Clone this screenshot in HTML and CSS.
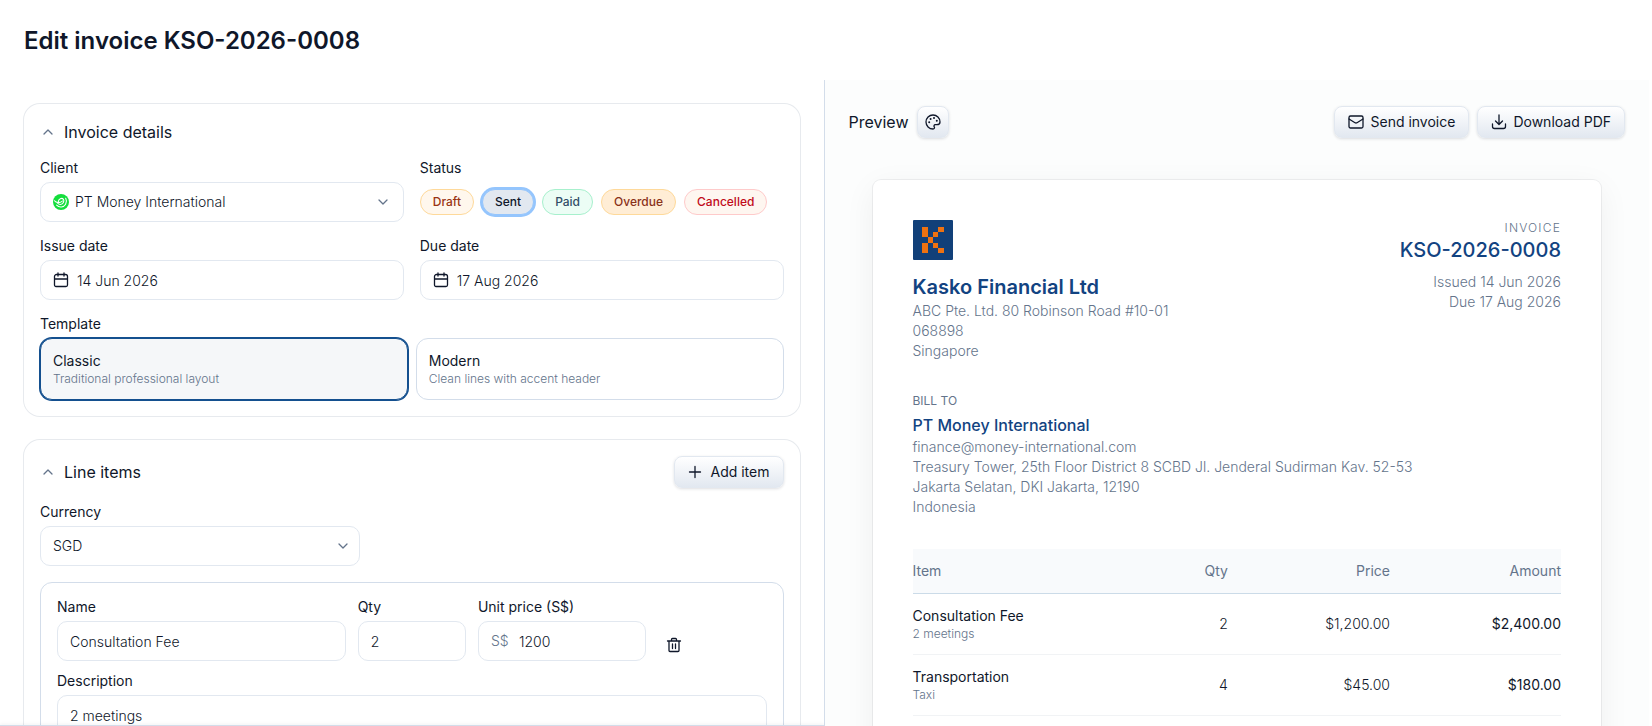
FILE: index.html
```html
<!DOCTYPE html>
<html lang="en">
<head>
  <meta charset="UTF-8" />
  <meta name="viewport" content="width=device-width, initial-scale=1.0" />
  <title>Edit invoice KSO-2026-0008</title>
  <link rel="stylesheet" href="styles.css">
</head>
<body>
  <div class="page">
    <header class="page-header">
      <h1>Edit invoice KSO-2026-0008</h1>
    </header>

    <main class="editor">
      <form class="form-pane">
        <div class="form-scroll">
          <section class="card">
            <div class="card-header">
              <button type="button" class="collapse-btn">
                <svg class="icon" viewBox="0 0 16 16"><path d="M4 10l4-4 4 4"/></svg>
                <span>Invoice details</span>
              </button>
            </div>

            <div class="field-grid">
              <div class="field">
                <label for="client">Client</label>
                <div class="control">
                  <svg class="client-logo" viewBox="0 0 16 16">
                    <circle cx="8" cy="8" r="8" fill="#14de3c"/>
                    <g fill="none" stroke="#fff" stroke-width="1.1" stroke-linecap="round">
                      <path d="M1.500 6.800C3 9 7.500 9.300 9.400 7"/>
                      <path d="M5.400 7.600C5.200 5 9 3.400 10.400 5.300c1.300 1.900-.4 5.100-3 5.200-1.300 0-2.200-.5-2.700-1.200"/>
                      <path d="M3.600 11.200c2.700 2.700 7.200 2.200 9-.9 1.100-1.900 1.100-4.200.1-6"/>
                    </g>
                  </svg>
                  <select id="client" class="input-client">
                    <option>PT Money International</option>
                  </select>
                  <svg class="icon chevron" viewBox="0 0 16 16"><path d="M4 6l4 4 4-4"/></svg>
                </div>
              </div>

              <div class="field" role="group" aria-labelledby="status-label">
                <span class="label" id="status-label">Status</span>
                <div class="chips">
                  <button type="button" class="chip chip-draft">Draft</button>
                  <button type="button" class="chip chip-sent active" aria-pressed="true">Sent</button>
                  <button type="button" class="chip chip-paid">Paid</button>
                  <button type="button" class="chip chip-overdue">Overdue</button>
                  <button type="button" class="chip chip-cancelled">Cancelled</button>
                </div>
              </div>

              <div class="field">
                <label for="issueDate">Issue date</label>
                <div class="control">
                  <svg class="icon calendar" viewBox="0 0 16 16"><path d="M1.500 4.500a2 2 0 0 1 2-2h9a2 2 0 0 1 2 2V13a1.500 1.500 0 0 1-1.500 1.500H3A1.500 1.500 0 0 1 1.500 13zM1.500 7h13M5 1v3M11 1v3"/></svg>
                  <input type="text" id="issueDate" class="input-date" value="14 Jun 2026">
                </div>
              </div>

              <div class="field">
                <label for="dueDate">Due date</label>
                <div class="control">
                  <svg class="icon calendar" viewBox="0 0 16 16"><path d="M1.500 4.500a2 2 0 0 1 2-2h9a2 2 0 0 1 2 2V13a1.500 1.500 0 0 1-1.500 1.500H3A1.500 1.500 0 0 1 1.500 13zM1.500 7h13M5 1v3M11 1v3"/></svg>
                  <input type="text" id="dueDate" class="input-date" value="17 Aug 2026">
                </div>
              </div>
            </div>

            <div class="field" role="group" aria-labelledby="template-label">
              <span class="label" id="template-label">Template</span>
              <div class="templates">
                <button type="button" class="template active" aria-pressed="true">
                  <span class="template-name">Classic</span>
                  <span class="template-desc">Traditional professional layout</span>
                </button>
                <button type="button" class="template">
                  <span class="template-name">Modern</span>
                  <span class="template-desc">Clean lines with accent header</span>
                </button>
              </div>
            </div>
          </section>

          <section class="card">
            <div class="card-header">
              <button type="button" class="collapse-btn">
                <svg class="icon" viewBox="0 0 16 16"><path d="M4 10l4-4 4 4"/></svg>
                <span>Line items</span>
              </button>
              <button type="button" class="btn">
                <svg class="icon" viewBox="0 0 16 16"><path d="M7 2.500v11M1.500 8h11"/></svg>
                Add item
              </button>
            </div>

            <div class="field field-currency">
              <label for="currency">Currency</label>
              <div class="control">
                <select id="currency">
                  <option>SGD</option>
                </select>
                <svg class="icon chevron" viewBox="0 0 16 16"><path d="M4 6l4 4 4-4"/></svg>
              </div>
            </div>

            <div class="line-item">
              <div class="line-grid">
                <div class="field col-name">
                  <label for="itemName">Name</label>
                  <input type="text" id="itemName" value="Consultation Fee">
                </div>
                <div class="field col-qty">
                  <label for="itemQty">Qty</label>
                  <input type="text" id="itemQty" value="2">
                </div>
                <div class="field col-price">
                  <label for="itemPrice">Unit price (S$)</label>
                  <div class="control">
                    <span class="prefix">S$</span>
                    <input type="text" id="itemPrice" class="input-price" value="1200">
                  </div>
                </div>
                <button type="button" class="delete-btn" aria-label="Delete item">
                  <svg class="icon" viewBox="0 0 16 16"><path d="M1.500 4h13M3 4v9.500a1 1 0 0 0 1 1h8a1 1 0 0 0 1-1V4M5.500 4V2.500a1 1 0 0 1 1-1h3a1 1 0 0 1 1 1V4M6.500 7v4.500M9.500 7v4.500"/></svg>
                </button>
              </div>
              <div class="field">
                <label for="itemDesc">Description</label>
                <textarea id="itemDesc" rows="2">2 meetings</textarea>
              </div>
            </div>
          </section>
        </div>
        <div class="form-footer"></div>
      </form>

      <section class="preview-pane">
        <div class="toolbar">
          <h2>Preview</h2>
          <button type="button" class="btn btn-icon" aria-label="Theme">
            <svg class="icon" viewBox="0 0 16 16"><path d="M8 15A7 7 0 1 1 15 8c0 2-1.500 2.700-3.100 2.700h-1.600a1.300 1.300 0 0 0-1 2.200C9.800 13.700 9.400 15 8 15z"/><path d="M4.200 8.300h.01M5.600 5h.01M9 4.100h.01M11.800 6.700h.01" stroke-width="2"/></svg>
          </button>
          <div class="toolbar-actions">
            <button type="button" class="btn">
              <svg class="icon" viewBox="0 0 16 16"><rect x="1" y="2" width="14" height="12" rx="1.500"/><path d="M1 5l6 3.700a2 2 0 0 0 2 0L15 5"/></svg>
              Send invoice
            </button>
            <button type="button" class="btn">
              <svg class="icon" viewBox="0 0 16 16"><path d="M8 1v9M4.500 7L8 10.500 11.500 7M1.500 10v2.500a2 2 0 0 0 2 2h9a2 2 0 0 0 2-2V10"/></svg>
              Download PDF
            </button>
          </div>
        </div>

        <article class="paper">
          <div class="paper-header">
            <div>
              <svg class="company-logo" viewBox="0 0 40 40">
                <rect width="40" height="40" rx="1" fill="#114079"/>
                <g fill="#ee7211">
                  <rect x="9" y="7" width="6" height="10"/>
                  <rect x="9" y="23" width="6" height="10"/>
                  <rect x="15" y="17" width="5" height="6"/>
                  <rect x="20" y="12" width="5" height="5"/>
                  <rect x="25" y="7" width="6" height="5"/>
                  <rect x="20" y="23" width="5" height="5"/>
                  <rect x="25" y="28" width="6" height="5"/>
                </g>
              </svg>
              <h3 class="company-name">Kasko Financial Ltd</h3>
              <address>
                ABC Pte. Ltd. 80 Robinson Road #10-01<br>
                068898<br>
                Singapore
              </address>
            </div>
            <div class="invoice-meta">
              <div class="meta-label">INVOICE</div>
              <div class="invoice-number">KSO-2026-0008</div>
              <div>Issued 14 Jun 2026</div>
              <div>Due 17 Aug 2026</div>
            </div>
          </div>

          <div class="bill-to">
            <div class="bill-label">BILL TO</div>
            <h4>PT Money International</h4>
            <address>
              finance@money-international.com<br>
              Treasury Tower, 25th Floor District 8 SCBD Jl. Jenderal Sudirman Kav. 52-53<br>
              Jakarta Selatan, DKI Jakarta, 12190<br>
              Indonesia
            </address>
          </div>

          <table class="items">
            <thead>
              <tr>
                <th>Item</th>
                <th class="num col-units">Qty</th>
                <th class="num col-rate">Price</th>
                <th class="num col-total">Amount</th>
              </tr>
            </thead>
            <tbody>
              <tr>
                <td>Consultation Fee<span class="item-desc">2 meetings</span></td>
                <td class="num">2</td>
                <td class="num">$1,200.00</td>
                <td class="num amount">$2,400.00</td>
              </tr>
              <tr>
                <td>Transportation<span class="item-desc">Taxi</span></td>
                <td class="num">4</td>
                <td class="num">$45.00</td>
                <td class="num amount">$180.00</td>
              </tr>
            </tbody>
          </table>
        </article>
      </section>
    </main>
  </div>
</body>
</html>
```
FILE: styles.css
```css
* {
  margin: 0;
  padding: 0;
  box-sizing: border-box;
}

body {
  font-family: 'Inter', 'Liberation Sans', sans-serif;
  font-size: 14px;
  line-height: 20px;
  color: #0f172a;
  background: #fff;
}

h1, h2, h3, h4 {
  font-weight: 600;
}

button, input, select, textarea {
  font: inherit;
  color: inherit;
}

button {
  cursor: pointer;
}

.page {
  height: 100vh;
  padding-right: 3px;
  display: flex;
  flex-direction: column;
  overflow: hidden;
}

.page-header {
  padding: 25px 24px 23px;
}

.page-header h1 {
  font-size: 24px;
  line-height: 32px;
}

.editor {
  flex: 1;
  min-height: 0;
  display: grid;
  grid-template-columns: 1fr 1fr;
}

/* Form */

.form-pane {
  display: flex;
  flex-direction: column;
  min-height: 0;
  min-width: 0;
  border-right: 1px solid #d3ddea;
}

.form-scroll {
  flex: 1;
  min-height: 0;
  overflow: hidden;
  padding: 24px;
  display: flex;
  flex-direction: column;
  gap: 24px;
}

.form-footer {
  border-top: 1px solid #d3ddea;
  box-shadow: 0 -1px 3px rgba(15, 23, 42, 0.1);
}

.card {
  flex-shrink: 0;
  padding: 16px;
  border-radius: 16px;
  box-shadow: 0 0 0 1px #e7eaee;
  display: flex;
  flex-direction: column;
  gap: 16px;
}

.card-header {
  display: flex;
  justify-content: space-between;
  align-items: center;
}

.collapse-btn {
  display: flex;
  align-items: center;
  gap: 8px;
  border: none;
  background: none;
  font-size: 16px;
  line-height: 24px;
}

.collapse-btn .icon {
  color: #64748b;
}

.icon {
  width: 16px;
  height: 16px;
  flex-shrink: 0;
  fill: none;
  stroke: currentColor;
  stroke-width: 1.3;
  stroke-linecap: round;
  stroke-linejoin: round;
}

.field-grid {
  display: grid;
  grid-template-columns: 1fr 1fr;
  gap: 16px;
}

.field {
  display: flex;
  flex-direction: column;
  gap: 6px;
  min-width: 0;
}

.field label, .label {
  line-height: 16px;
}

.field-currency {
  width: 320px;
}

.control {
  position: relative;
}

input, select, textarea {
  display: block;
  width: 100%;
  height: 40px;
  padding: 0 12px;
  border: 1px solid #e2e8f0;
  border-radius: 10px;
  background: #fff;
  font-weight: 300;
  appearance: none;
}

textarea {
  height: 64px;
  padding: 10px 12px;
  resize: none;
}

.input-client {
  padding-left: 34px;
}

.input-date {
  padding-left: 36px;
}

.input-price {
  padding-left: 40px;
}

.client-logo, .calendar, .chevron, .prefix {
  position: absolute;
  top: 12px;
  left: 13px;
  pointer-events: none;
}

.client-logo {
  width: 16px;
  height: 16px;
}

.chevron {
  left: auto;
  right: 13px;
  color: #64748b;
}

.field-currency .chevron {
  right: 9px;
}

.prefix {
  top: 10px;
  color: #64748b;
  font-weight: 300;
}

.chips {
  display: flex;
  align-items: center;
  gap: 8px;
  height: 40px;
}

.chip {
  padding: 0 12px;
  border: 1px solid;
  border-radius: 13px;
  font-size: 12px;
  font-weight: 500;
  line-height: 24px;
}

.chip-draft {
  background: #fff7ed;
  border-color: #fed99a;
  color: #9a3412;
}

.chip-sent {
  background: #e2e8f0;
  border-color: #94c5fd;
}

.chip.active {
  box-shadow: 0 0 0 2px #94c5fd;
}

.chip-paid {
  background: #ecfdf5;
  border-color: #a7f0cd;
  color: #334e68;
}

.chip-overdue {
  background: #ffedd5;
  border-color: #fed99a;
  color: #8a3219;
}

.chip-cancelled {
  background: #fef6f0;
  border-color: #fecaca;
  color: #c10b1b;
}

.templates {
  display: grid;
  grid-template-columns: 1fr 1fr;
  gap: 8px;
}

.template {
  padding: 12px;
  border: 1px solid #d3ddea;
  border-radius: 12px;
  background: #fff;
  text-align: left;
}

.template.active {
  border-color: #14508f;
  box-shadow: 0 0 0 1px #14508f;
  background: #f5f7f9;
}

.template-name, .template-desc {
  display: block;
}

.template-desc {
  font-size: 12px;
  line-height: 16px;
  font-weight: 300;
  color: #64748b;
}

.btn {
  display: flex;
  align-items: center;
  gap: 6px;
  height: 32px;
  padding: 0 13px;
  border: 1px solid #e2e8f0;
  border-radius: 8px;
  background: linear-gradient(#fff, #e2e8f0);
  box-shadow: 0 1px 3px rgba(15, 23, 42, 0.14);
}

.btn-icon {
  padding: 0 7px;
}

.line-item {
  padding: 16px;
  border: 1px solid #d3ddea;
  border-radius: 12px;
  display: flex;
  flex-direction: column;
  gap: 12px;
}

.line-grid {
  display: grid;
  grid-template-columns: repeat(12, 1fr);
  gap: 12px;
}

.col-name {
  grid-column: span 5;
}

.col-qty {
  grid-column: span 2;
}

.col-price {
  grid-column: span 3;
}

.delete-btn {
  align-self: end;
  display: flex;
  width: 32px;
  padding: 8px;
  border: none;
  background: none;
}

/* Preview */

.preview-pane {
  min-width: 0;
  overflow: hidden;
  padding: 24px;
  background: #fcfdfd;
}

.toolbar {
  display: flex;
  align-items: center;
  gap: 8px;
  padding-top: 2px;
}

.toolbar h2 {
  font-size: 16px;
  font-weight: 400;
}

.toolbar-actions {
  display: flex;
  gap: 8px;
  margin-left: auto;
}

.paper {
  margin: 42px 24px 24px;
  min-height: 900px;
  padding: 40px;
  border-radius: 8px;
  background: #fff;
  box-shadow: 0 0 0 1px rgba(15, 23, 42, 0.06), 0 8px 32px rgba(15, 23, 42, 0.06);
}

.paper-header {
  display: flex;
  justify-content: space-between;
}

.company-logo {
  display: block;
  width: 40px;
  height: 40px;
}

.company-name {
  margin-top: 13px;
  font-size: 20px;
  line-height: 28px;
  color: #124381;
}

address {
  font-style: normal;
  font-weight: 300;
  color: #64748b;
}

.invoice-meta {
  text-align: right;
  font-weight: 300;
  color: #64748b;
}

.meta-label {
  font-size: 12px;
  line-height: 16px;
  letter-spacing: 0.1em;
}

.invoice-number {
  margin-bottom: 8px;
  font-size: 20px;
  line-height: 28px;
  font-weight: 500;
  color: #124381;
}

.bill-to {
  margin: 32px 0;
}

.bill-label {
  font-size: 12px;
  line-height: 16px;
  color: #64748b;
}

.bill-to h4 {
  margin-top: 4px;
  font-size: 16px;
  line-height: 24px;
  font-weight: 500;
  color: #124381;
}

.items {
  width: 100%;
  border-collapse: collapse;
  table-layout: fixed;
}

.items th {
  padding: 12px 0;
  background: #f8fafc;
  border-bottom: 1px solid #cbdbe8;
  font-weight: 400;
  text-align: left;
  color: #64748b;
}

.col-units {
  width: 100px;
}

.col-rate {
  width: 25%;
}

.col-total {
  width: 171px;
}

.items td {
  padding: 12px 0;
  border-bottom: 1px solid #f1f3f5;
}

.items .num {
  text-align: right;
  font-weight: 300;
}

.items th.num, .items .amount {
  font-weight: 400;
}

.item-desc {
  display: block;
  font-size: 12px;
  line-height: 16px;
  font-weight: 300;
  color: #64748b;
}
```
